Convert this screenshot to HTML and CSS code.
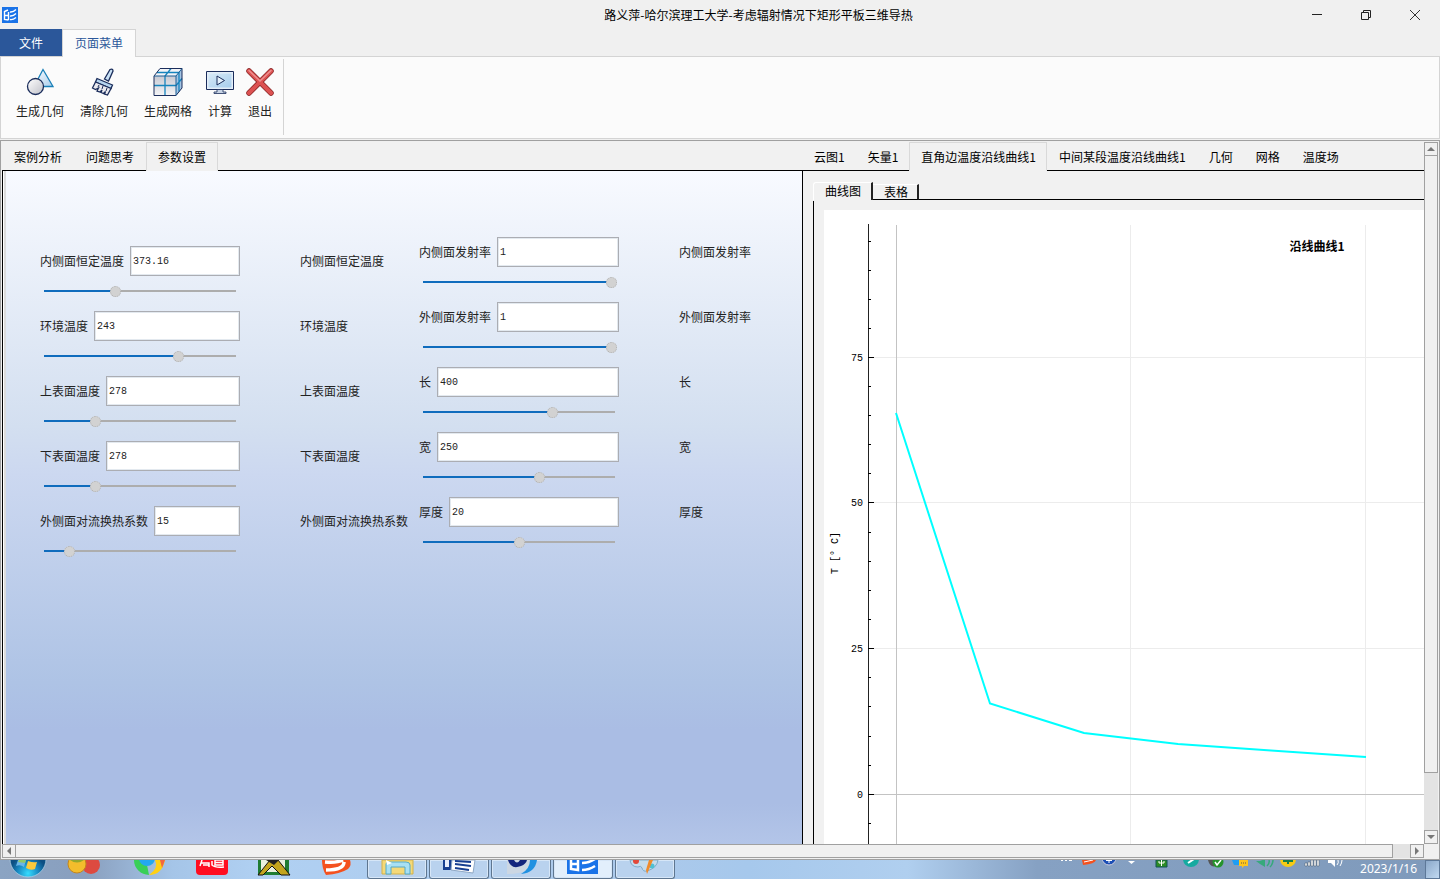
FILE: index.html
```html
<!DOCTYPE html>
<html lang="zh-CN">
<head>
<meta charset="utf-8">
<title>路义萍-哈尔滨理工大学-考虑辐射情况下矩形平板三维导热</title>
<link rel="stylesheet" href="styles.css">
</head>
<body>
<div class="app">
  <header class="titlebar">
    <svg class="app-icon" width="16" height="16" viewBox="0 0 16 16"><rect width="16" height="16" fill="#1a73e8"/><path d="M2.500 4.500L6 3M2.500 4v8.500l4 .5M3 8.500h3M6.500 5v8M8 5q3 .5 6-2.500M8 9q3 .5 6-2.500M8 12.500q3 .5 6-2" fill="none" stroke="#fff" stroke-width="1.400"/></svg>
    <h1 class="title">路义萍-哈尔滨理工大学-考虑辐射情况下矩形平板三维导热</h1>
    <div class="window-buttons">
      <button aria-label="最小化"><svg width="12" height="12"><path d="M1 5.500h10" stroke="#222"/></svg></button>
      <button aria-label="还原"><svg width="12" height="12"><path d="M3.500 3V1.500h7v7H9M1.500 3.500h7v7h-7z" fill="none" stroke="#222"/></svg></button>
      <button aria-label="关闭"><svg width="12" height="12"><path d="M1 1l10 10M11 1L1 11" stroke="#333"/></svg></button>
    </div>
  </header>
  <nav class="ribbon-tabs">
    <button class="file-tab">文件</button>
    <button class="menu-tab">页面菜单</button>
  </nav>
  <section class="ribbon">
    <div class="ribbon-group">
      <button class="tool"><svg width="28" height="28" viewBox="0 0 28 28"><defs><linearGradient id="tri" x2="1" y2="1"><stop offset="0" stop-color="#fff"/><stop offset="1" stop-color="#a9cdec"/></linearGradient><linearGradient id="ball" x2="1" y2="1"><stop offset="0" stop-color="#fff"/><stop offset="1" stop-color="#bfc0c8"/></linearGradient></defs><path d="M17 1.500L8 18.500h19z" fill="url(#tri)" stroke="#1a80b8" stroke-width="1.300"/><circle cx="9.500" cy="18.500" r="8" fill="url(#ball)" stroke="#1b2d5b" stroke-width="1.300"/></svg>生成几何</button>
      <button class="tool"><svg width="28" height="28" viewBox="0 0 28 28"><path d="M20 1.500q3-1 3 1.500L18.500 13l-4-2z" fill="#c9e1f5" stroke="#1b2d5b" stroke-width="1.300"/><path d="M7 10.500l15.500 6.500-1.500 3.500L5.500 14z" fill="#b5d4ee" stroke="#1b2d5b" stroke-width="1.300"/><path d="M5.500 14L21 20.500 17.500 27l-3-1 1-2.500-2 2-2.500-1 1-2.500-2 2-3-1 1.500-3-3 1.500-3-1.500z" fill="#e9e9ee" stroke="#1b2d5b" stroke-width="1.300"/><path d="M9 17l-1 2M13 18l-1 3M17 20l-1 3" stroke="#1b2d5b"/></svg>清除几何</button>
      <button class="tool"><svg width="30" height="28" viewBox="0 0 30 28"><defs><linearGradient id="cube" x2="0" y2="1"><stop offset="0" stop-color="#c8cad3"/><stop offset="1" stop-color="#f4f4f6"/></linearGradient></defs><path d="M1 8L7 .5h22L23 8z" fill="#f3f4f8"/><path d="M1 8h22v19.500H1z" fill="url(#cube)"/><path d="M23 8l6-7.500V20l-6 7.500z" fill="#a3c4e3"/><path d="M12 27V8l6-7.500M1 17.500h22l6-7M4 4.500h22v19" fill="none" stroke="#1684bd" stroke-width="1.300"/><path d="M1 8L7 .5h22V20l-6 7.500H1z" fill="none" stroke="#1b2d5b"/><path d="M1 8h22l6-7.500M23 8v19.500" fill="none" stroke="#1b5f95"/></svg>生成网格</button>
      <button class="tool"><svg width="28" height="28" viewBox="0 0 28 28"><defs><linearGradient id="screen" x2="1" y2="1"><stop offset="0" stop-color="#d8eaf7"/><stop offset="1" stop-color="#a6cdec"/></linearGradient></defs><path d="M.5 3.500h27v18H.5z" fill="#e4eef8" stroke="#1b2d5b"/><path d="M2.500 5.500h23v14h-23z" fill="url(#screen)"/><path d="M11 8l7.500 4.500L11 17z" fill="#e4f1fb" stroke="#1b2d5b"/><path d="M11 21.500h6V24h3v1.500H8V24h3z" fill="#c8d4e5" stroke="#1b2d5b" stroke-width=".8"/></svg>计算</button>
      <button class="tool"><svg width="28" height="28" viewBox="0 0 28 28"><path d="M3 3l22 22M25 3L3 25" stroke="#8d2929" stroke-width="5.500" stroke-linecap="round"/><path d="M3 3l22 22M25 3L3 25" stroke="#dc5252" stroke-width="4" stroke-linecap="round"/><path d="M3 2.500l11 10.500L25 2.500" fill="none" stroke="#ef9090" stroke-width="1.500" stroke-linecap="round"/></svg>退出</button>
    </div>
  </section>
  <main class="workspace">
    <div class="content">
      <section class="pane params-pane">
        <div class="tabs">
          <button class="tab">案例分析</button>
          <button class="tab">问题思考</button>
          <button class="tab selected">参数设置</button>
        </div>
        <div class="params-frame">
          <form class="params">
            <div class="group lowered">
              <div class="param">
                <div class="field"><label for="p1">内侧面恒定温度</label><input id="p1" class="value" type="text" value="373.16"></div>
                <input class="slider" type="range" aria-label="内侧面恒定温度" min="0" max="100" value="37" style="--v:37%">
                <span class="caption">内侧面恒定温度</span>
              </div>
              <div class="param">
                <div class="field"><label for="p2">环境温度</label><input id="p2" class="value" type="text" value="243"></div>
                <input class="slider" type="range" aria-label="环境温度" min="0" max="100" value="71" style="--v:71%">
                <span class="caption">环境温度</span>
              </div>
              <div class="param">
                <div class="field"><label for="p3">上表面温度</label><input id="p3" class="value" type="text" value="278"></div>
                <input class="slider" type="range" aria-label="上表面温度" min="0" max="100" value="26" style="--v:26%">
                <span class="caption">上表面温度</span>
              </div>
              <div class="param">
                <div class="field"><label for="p4">下表面温度</label><input id="p4" class="value" type="text" value="278"></div>
                <input class="slider" type="range" aria-label="下表面温度" min="0" max="100" value="26" style="--v:26%">
                <span class="caption">下表面温度</span>
              </div>
              <div class="param">
                <div class="field"><label for="p5">外侧面对流换热系数</label><input id="p5" class="value" type="text" value="15"></div>
                <input class="slider" type="range" aria-label="外侧面对流换热系数" min="0" max="100" value="12" style="--v:12%">
                <span class="caption">外侧面对流换热系数</span>
              </div>
            </div>
            <div class="group">
              <div class="param">
                <div class="field"><label for="p6">内侧面发射率</label><input id="p6" class="value" type="text" value="1"></div>
                <input class="slider" type="range" aria-label="内侧面发射率" min="0" max="100" value="100" style="--v:100%">
                <span class="caption">内侧面发射率</span>
              </div>
              <div class="param">
                <div class="field"><label for="p7">外侧面发射率</label><input id="p7" class="value" type="text" value="1"></div>
                <input class="slider" type="range" aria-label="外侧面发射率" min="0" max="100" value="100" style="--v:100%">
                <span class="caption">外侧面发射率</span>
              </div>
              <div class="param">
                <div class="field"><label for="p8">长</label><input id="p8" class="value" type="text" value="400"></div>
                <input class="slider" type="range" aria-label="长" min="0" max="100" value="68" style="--v:68%">
                <span class="caption">长</span>
              </div>
              <div class="param">
                <div class="field"><label for="p9">宽</label><input id="p9" class="value" type="text" value="250"></div>
                <input class="slider" type="range" aria-label="宽" min="0" max="100" value="61" style="--v:61%">
                <span class="caption">宽</span>
              </div>
              <div class="param">
                <div class="field"><label for="p10">厚度</label><input id="p10" class="value" type="text" value="20"></div>
                <input class="slider" type="range" aria-label="厚度" min="0" max="100" value="50" style="--v:50%">
                <span class="caption">厚度</span>
              </div>
            </div>
          </form>
        </div>
      </section>
      <section class="pane chart-pane">
        <div class="tabs">
          <button class="tab">云图1</button>
          <button class="tab">矢量1</button>
          <button class="tab selected">直角边温度沿线曲线1</button>
          <button class="tab">中间某段温度沿线曲线1</button>
          <button class="tab">几何</button>
          <button class="tab">网格</button>
          <button class="tab">温度场</button>
        </div>
        <div class="chart-frame">
          <div class="sub-tabs">
            <button class="sub-tab current">曲线图</button>
            <button class="sub-tab">表格</button>
            <span class="sub-line"></span>
          </div>
          <div class="sub-page">
            <svg class="chart" width="100%" height="100%">
              <g stroke="#ececec">
                <path d="M306.500 15V2000M541.500 15V2000"/>
                <path d="M45 147.500H3000M45 292.500H3000M45 438.500H3000"/>
              </g>
              <path d="M72.500 15V2000M45 584.500H3000" stroke="#c3c3c3"/>
              <path d="M44.500 14V2000" stroke="#222"/>
              <path d="M44 31.500h3M44 60.500h3M44 89.500h3M44 118.500h3M44 176.500h3M44 205.500h3M44 234.500h3M44 263.500h3M44 322.500h3M44 351.500h3M44 380.500h3M44 409.500h3M44 467.500h3M44 496.500h3M44 526.500h3M44 555.500h3M44 613.500h3M44 147.500h6M44 292.500h6M44 438.500h6M44 584.500h6" stroke="#000"/>
              <path d="M72 203L166 493.500L260 523L354 534L447 540.500L542 547" fill="none" stroke="#0ff" stroke-width="2"/>
              <g class="axis-text" text-anchor="end">
                <text x="39" y="151">75</text><text x="39" y="296">50</text><text x="39" y="442">25</text><text x="39" y="588">0</text>
              </g>
              <text class="axis-text" text-anchor="middle" transform="translate(14 343) rotate(-90)">T [° C]</text>
              <text class="chart-title" x="493" y="41" text-anchor="middle">沿线曲线1</text>
            </svg>
          </div>
        </div>
      </section>
    </div>
    <div class="scroll vertical">
      <button class="arrow" aria-label="向上"><svg width="8" height="8"><path d="M0 6L4 2L8 6z" fill="#777"/></svg></button>
      <div class="thumb"></div>
      <button class="arrow" aria-label="向下"><svg width="8" height="8"><path d="M0 2L4 6L8 2z" fill="#777"/></svg></button>
    </div>
    <div class="scroll horizontal">
      <button class="arrow" aria-label="向左"><svg width="8" height="8"><path d="M6 0L2 4L6 8z" fill="#777"/></svg></button>
      <div class="thumb"></div>
      <button class="arrow" aria-label="向右"><svg width="8" height="8"><path d="M2 0L6 4L2 8z" fill="#777"/></svg></button>
    </div>
    <div class="corner"></div>
  </main>
</div>
<footer class="taskbar">
  <button class="start" aria-label="开始"><svg width="54" height="19"><defs><radialGradient id="orb" cx=".5" cy=".9"><stop offset="0" stop-color="#35dcff"/><stop offset=".6" stop-color="#1887c0"/><stop offset="1" stop-color="#0d4f83"/></radialGradient></defs><circle cx="27" cy="-1" r="18" fill="url(#orb)" stroke="#b5d6ea" stroke-opacity=".7"/><path d="M17 0h8l-2 7q-4-3-8-1z" fill="#6ab5e8"/><path d="M18 0h7l-1 3-7-1z" fill="#8ec86a"/><path d="M27 1q5 2 9 1l-2 7q-4 2-9-1z" fill="#fbc93b"/></svg></button>
  <button class="task" aria-label="应用"><svg width="60" height="19"><circle cx="34" cy="5" r="9" fill="#dd4a40"/><circle cx="20" cy="4" r="9" fill="#f3bd2c" stroke="#c5861c"/><path d="M13 0q7 5 14 0z" fill="#95a82d"/></svg></button>
  <button class="task" aria-label="浏览器"><svg width="60" height="19"><path d="M15 0a15 15 0 0 0 15 15l-3-15z" fill="#39cf57"/><path d="M36 0q4 8-6 15 13 0 16-15z" fill="#ffd015"/><path d="M41 0h5l-3 8z" fill="#f26541"/><circle cx="28" cy="-2" r="8" fill="#24a8ee"/></svg></button>
  <button class="task" aria-label="有道"><svg width="60" height="19"><path d="M15 0h32v11q0 4-4 4H19q-4 0-4-4z" fill="#ff0d21"/><path d="M21 0l-2 6M20 3h8v4M22 5h6M34 0h8v5h-8zM34 2.500h8M31 1v4q3 3 12 2" fill="none" stroke="#fff" stroke-width="1.500"/></svg></button>
  <button class="task" aria-label="程序"><svg width="60" height="19"><path d="M15 0h31v15H15z" fill="#1f7c32"/><path d="M18 0h24v12H18z" fill="#e9f0df"/><path d="M15 15L27 0h8l12 15h-9L29 6l-9 9z" fill="#c4a51f" stroke="#111"/><path d="M23 0l8 5 5-5z" fill="#222"/></svg></button>
  <button class="task" aria-label="搜狗"><svg width="60" height="19"><path d="M17 0h28q2 5-2 9-8 5-22 6-4-6-4-15z" fill="#f4511e"/><path d="M20 2q12 1 18-2M21 10q18 0 18-8" fill="none" stroke="#fff" stroke-width="3.500"/></svg></button>
  <button class="task open" aria-label="文件夹"><svg width="58" height="18"><path d="M14 0h31v14H14z" fill="#f4d978" stroke="#d2b14b"/><path d="M18 14V4q0-2 3-2h17q4 0 4 3v9h-5V7H23v7z" fill="#a8e0f3" stroke="#55a9c7"/><path d="M18 0l6 3-5 2z" fill="#fff"/></svg></button>
  <button class="task open" aria-label="文档"><svg width="58" height="18"><path d="M13 0h22v10H13z" fill="#173f91"/><path d="M22 0h23l-2 13-22-3z" fill="#fff" stroke="#8fa8c5"/><path d="M15 0h4v7h-4z" fill="#e8eefc"/><path d="M25 1l16 1M25 4l16 2M25 8l14 2" stroke="#173f91" stroke-width="1.800"/></svg></button>
  <button class="task open" aria-label="软件"><svg width="58" height="18"><path d="M15 0h27q-3 14-27 14z" fill="#ccd7e3"/><path d="M38 0h7q-2 13-16 14 9-5 9-14z" fill="#2091e1"/><path d="M16 0q3 10 13 6 5-2 6-6h-7q-3 5-6 0z" fill="#12257d"/></svg></button>
  <button class="task open active" aria-label="三维导热"><svg width="58" height="18"><path d="M13 0h31v14H13z" fill="#1a73e8"/><path d="M17 0v9l7 1V0M17 4h7M28 3q7 0 13-4M28 10q7 0 13-4" fill="none" stroke="#fff" stroke-width="2.500"/></svg></button>
  <button class="task open" aria-label="画图"><svg width="58" height="18"><path d="M14 0h28q-1 8-11 11-4 1-5-3-1-3-4-1-7 0-8-7z" fill="#c5dced" stroke="#7eabc9"/><circle cx="20" cy="1" r="3" fill="#e24839"/><circle cx="36" cy="6" r="2.500" fill="#4ec1d4"/><path d="M37 0l-6 14-1-4 3-10z" fill="#ef8b2d"/></svg></button>
  <div class="tray">
    <svg width="288" height="19"><path d="M3 .5h2M7 .5h2M11 .5h3" stroke="#fff"/><path d="M24 0h14q-1 4-13 5z" fill="#f4511e"/><path d="M26 2l9-2" stroke="#fff"/><circle cx="51" cy="-2" r="7" fill="#1b4fb5" stroke="#ccd"/><path d="M51 0v3M48 .5h6" stroke="#fff"/><path d="M70 1h7l-3.500 3z" fill="#fff"/><path d="M98 0h11v7H98z" fill="#2c8c23" stroke="#155"/><path d="M103.500 0v6M101 1v2h5V1" fill="none" stroke="#fff"/><circle cx="133" cy="-1" r="8" fill="#16aaa0"/><path d="M130 3l6-4" stroke="#fff" stroke-width="2"/><path d="M150 0h8v6q-6 2-8-6z" fill="#555"/><circle cx="160" cy="2" r="5.500" fill="#25932c"/><path d="M157 2l2 3 4-5" fill="none" stroke="#fff" stroke-width="1.500"/><path d="M174 0h9v5h-7z" fill="#1f9df4"/><path d="M181 0h9v6h-4l-2 2v-2h-3z" fill="#ffc51b"/><path d="M183 3h6" stroke="#654" stroke-dasharray="1 1"/><path d="M198 1h4l5-2v8l-5-3z" fill="#37a97c"/><path d="M209 6q3-3 2-6M212 7q3-3 3-7" fill="none" stroke="#37a97c" stroke-width="1.500"/><circle cx="230" cy="-1" r="8" fill="#f7cb14"/><path d="M230 0v4M225 1h10" stroke="#16804a" stroke-width="2"/><path d="M247 3h2v3h-2zM250 2h2v4h-2zM253 0h2v6h-2zM256 0h2v6h-2zM259 0h2v6h-2z" fill="#fff" stroke="#456" stroke-width=".5"/><path d="M270 0h3l4-2v9l-4-4h-3z" fill="#fff"/><path d="M279 5q2-2 1-5M282 6q2-3 2-6" fill="none" stroke="#fff"/></svg>
    <time>2023/1/16</time>
    <button class="desktop" aria-label="显示桌面"></button>
  </div>
</footer>
</body>
</html>
```
FILE: styles.css
```css
* { box-sizing: border-box; }
body {
  margin: 0;
  height: 100vh;
  display: flex;
  flex-direction: column;
  overflow: hidden;
  background: #f0f0f0;
  color: #000;
  font: 12px/16px "Noto Sans CJK SC", sans-serif;
}
button {
  margin: 0;
  padding: 0;
  border: 0;
  background: none;
  color: inherit;
  font: inherit;
  white-space: nowrap;
}
svg { display: block; flex: none; }

.app { flex: 1; min-height: 0; display: flex; flex-direction: column; }

.titlebar { display: flex; align-items: center; height: 29px; padding: 0 1px 0 2px; }
.title { flex: 1; margin: 0; padding-left: 207px; text-align: center; font-size: 12px; font-weight: 400; }
.window-buttons { display: flex; }
.window-buttons button { width: 49px; height: 28px; display: grid; place-items: center; }

.ribbon-tabs { display: flex; height: 28px; margin-bottom: -1px; z-index: 1; }
.file-tab { width: 62px; height: 27px; background: #2b579a; color: #fff; }
.menu-tab { width: 74px; padding-bottom: 1px; background: #fbfbfb; color: #2b579a; border: 1px solid #d4d4d4; border-bottom: 0; }
.ribbon { height: 83px; margin-bottom: 1px; padding: 2px 0 3px 7px; background: #fbfbfb; border: 1px solid #d4d4d4; }
.ribbon-group { display: flex; width: max-content; height: 100%; padding-right: 3px; border-right: 1px solid #d4d4d4; }
.tool { display: flex; flex-direction: column; align-items: center; gap: 7px; padding: 9px 8px 0; color: #222; }
.tool:nth-child(n+4) { padding-left: 6px; padding-right: 6px; }

.workspace {
  flex: 1;
  min-height: 0;
  display: grid;
  grid-template: minmax(0, 1fr) 14px / minmax(0, 1fr) 14px;
  padding: 1px;
  border: 1px solid #a0a0a0;
}
.content { display: flex; overflow: hidden; background: #f1f1f1; }
.pane { display: flex; flex-direction: column; min-width: 0; }
.params-pane { flex: 800 1 0; }
.chart-pane { flex: 622 1 0; }
.tabs { display: flex; height: 29px; flex: none; border-bottom: 1px solid #000; }
.tab { padding: 1px 12px 0; height: 28px; }
.tab.selected { height: 29px; padding: 0 11px; border: 1px solid #d9d9d9; border-bottom-color: #f1f1f1; background: #f1f1f1; }
.chart-pane .tab { padding-right: 11px; }
.chart-pane .tab.selected { padding-right: 10px; }

.params-frame { flex: 1; display: flex; padding-left: 3px; border-left: 1px solid #000; background: linear-gradient(to right, #fff 1px, #dcdcdc 1px); }
.params {
  flex: 1;
  display: flex;
  align-items: flex-start;
  gap: 11px;
  padding: 66px 0 0 34px;
  color: #222;
  background: linear-gradient(#f8faff 0%, #d3dff0 38%, #ccd8f0 45%, #aec3e5 76%, #aabde4 83%, #aabde4 94%, #b3c5e8 100%);
}
.lowered { padding-top: 9px; }
.param { display: grid; grid-template-columns: 200px auto; grid-template-rows: 30px 20px; column-gap: 60px; row-gap: 5px; margin-bottom: 10px; }
.field { display: flex; align-items: center; gap: 6px; }
.field label { white-space: nowrap; }
.value {
  flex: 1;
  min-width: 0;
  height: 30px;
  padding: 0 2px;
  border: 1px solid #abadb3;
  border-radius: 0;
  outline: 1px solid #e3e9ef;
  outline-offset: -2px;
  background: #fff;
  color: #222;
  font: 10px/16px "Liberation Mono", monospace;
}
.caption { grid-column: 2; grid-row: 1; align-self: center; white-space: nowrap; }
.slider {
  grid-column: 1;
  grid-row: 2;
  appearance: none;
  height: 20px;
  margin: 0 2px;
  background: linear-gradient(to right, #0f6cbd var(--v), #adadad var(--v)) center / calc(100% - 4px) 2px no-repeat;
}
.slider::-webkit-slider-thumb { appearance: none; width: 11px; height: 11px; border: 1px dotted #b0b0b0; border-radius: 50%; background: #d2d2d2; }

.chart-frame { flex: 1; min-height: 0; display: flex; flex-direction: column; padding: 11px 0 0 10px; border-left: 1px solid #000; }
.sub-tabs { display: flex; align-items: flex-end; height: 18px; flex: none; }
.sub-tab { height: 16px; padding: 0 9px 0 11px; border-top: 1px solid #fff; border-right: 2px solid #222; border-bottom: 1px solid #000; line-height: 14px; }
.sub-tab.current { height: 18px; padding: 0 10px 1px 11px; border-left: 1px solid #fff; border-bottom: 0; border-top-left-radius: 3px; }
.sub-line { flex: 1; border-bottom: 1px solid #000; }
.sub-page { flex: 1; min-height: 0; margin-top: 1px; padding: 9px 0 0 10px; border-left: 1px solid #000; }
.chart { background: #fff; }
.axis-text { font: 10px "Liberation Mono", monospace; }
.chart-title { font-size: 12px; font-weight: 700; }

.scroll { display: flex; background: #e3e3e3; }
.scroll .thumb { border: 1px solid #a0a0a0; background: #f0f0f0; }
.arrow { width: 14px; height: 14px; display: grid; place-items: center; border: 1px solid #a0a0a0; background: #f0f0f0; }
.vertical { flex-direction: column; }
.vertical .thumb { flex: 1; margin-bottom: 57px; border-top: 0; }
.horizontal .thumb { flex: 1; margin-right: 17px; border-left: 0; }
.corner { background: #f0f0f0; }

.taskbar {
  display: flex;
  gap: 2px;
  height: 19px;
  flex: none;
  overflow: hidden;
  padding-left: 1px;
  background: linear-gradient(to right, #8ba4c3 0, #899fbe 6%, #a5c5e8 12%, #b0d0f2 18%, #abc9eb 45%, #a6c8ec 52%, #b0cfef 63%, #86a1c3 72%, #7f9abb 100%);
}
.task { width: 60px; }
.open { border: 1px solid #5e7690; border-top: 0; border-radius: 0 0 3px 3px; background: #b9d2ee; box-shadow: inset 0 0 0 1px #d6e6f7; }
.active { background: #e2effc; }
.tray { display: flex; margin-left: auto; gap: 8px; color: #fff; }
.tray svg { margin-right: 6px; }
.tray time { font: 12px/18px "Noto Sans", sans-serif; }
.desktop { width: 15px; border: 1px solid #5d7898; background: linear-gradient(135deg, #8ba8c9, #c1d9f1); }
```
